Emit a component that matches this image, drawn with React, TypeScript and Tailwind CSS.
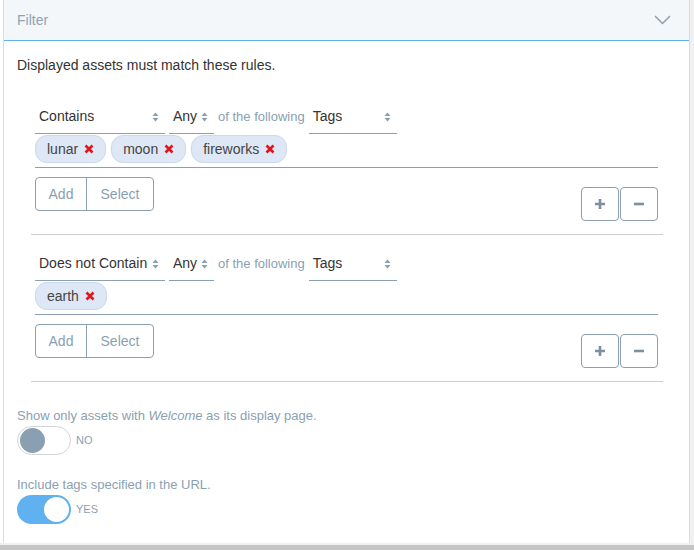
import React from "react";

const font = { fontFamily: '"Liberation Sans", Arial, sans-serif' };

function SortArrows() {
  return (
    <svg width="7" height="10" viewBox="0 0 7 10" className="shrink-0">
      <path d="M3.5 0.5 L6.5 4 H0.5 Z" fill="#8a9fb3" />
      <path d="M3.5 9.5 L6.5 6 H0.5 Z" fill="#8a9fb3" />
    </svg>
  );
}

function RedX() {
  return (
    <svg width="10" height="10" viewBox="0 0 10 10" className="shrink-0">
      <path d="M1.5 1.5 L8.5 8.5 M8.5 1.5 L1.5 8.5" stroke="#e3131a" strokeWidth="2.6" strokeLinecap="butt" />
    </svg>
  );
}

function Select({ label, width }: { label: string; width: string }) {
  return (
    <div className={`${width} h-full flex items-center justify-between pl-[4px] pr-[6px] border-b border-[#8a9fb0] text-[14px] text-[#333]`}>
      <span className="whitespace-nowrap">{label}</span>
      <SortArrows />
    </div>
  );
}

function Chip({ label }: { label: string }) {
  return (
    <div className="h-[28px] flex items-center gap-[6px] pl-[11px] pr-[11px] rounded-[12px] bg-[#dee7f6] border border-[#cbd8ee] text-[14px] text-[#444]">
      <span>{label}</span>
      <RedX />
    </div>
  );
}

function Rule({ op, tags }: { op: string; tags: string[] }) {
  return (
    <div className="border-b border-[#cccccc] pl-[4px] pr-[5px] pb-[13px]">
      <div className="h-[34px] flex items-stretch gap-[4px]">
        <Select label={op} width="w-[130px]" />
        <Select label="Any" width="w-[45px]" />
        <div className="flex items-center text-[13px] text-[#8a9fb3] whitespace-nowrap">of the following</div>
        <Select label="Tags" width="w-[88px]" />
      </div>
      <div className="flex gap-[5px] pt-[1px] pb-[4px] border-b border-[#8a9fb0]">
        {tags.map((t) => (
          <Chip key={t} label={t} />
        ))}
      </div>
      <div className="flex justify-between items-start mt-[9px]">
        <div className="flex h-[34px] border border-[#8a9fb0] rounded-[4px] text-[14px] text-[#8a9fb3]">
          <div className="w-[51px] flex items-center justify-center border-r border-[#8a9fb0]">Add</div>
          <div className="w-[66px] flex items-center justify-center">Select</div>
        </div>
        <div className="flex gap-[1px] mt-[10px]">
          <div className="w-[38px] h-[34px] border border-[#8a9fb0] rounded-[4px] flex items-center justify-center">
            <svg width="12" height="12" viewBox="0 0 12 12">
              <path d="M6 1 V11 M1 6 H11" stroke="#7b90a3" strokeWidth="2.6" />
            </svg>
          </div>
          <div className="w-[38px] h-[34px] border border-[#8a9fb0] rounded-[4px] flex items-center justify-center">
            <svg width="12" height="12" viewBox="0 0 12 12">
              <path d="M1 6 H11" stroke="#7b90a3" strokeWidth="2.6" />
            </svg>
          </div>
        </div>
      </div>
    </div>
  );
}

function Toggle({ on }: { on: boolean }) {
  return (
    <div className="flex items-center gap-[5px]">
      {on ? (
        <div className="w-[54px] h-[29px] rounded-full bg-[#5fb2ef] flex items-center justify-end pr-[2px]">
          <div className="w-[25px] h-[25px] rounded-full bg-white" />
        </div>
      ) : (
        <div className="w-[54px] h-[29px] rounded-full bg-white border border-[#d4d4d4] flex items-center pl-[2px]">
          <div className="w-[25px] h-[25px] rounded-full bg-[#8a9fb1]" />
        </div>
      )}
      <span className="text-[11px] text-[#8a9fb3]">{on ? "YES" : "NO"}</span>
    </div>
  );
}

export default function App() {
  return (
    <div className="w-[694px] h-[550px] bg-white flex flex-col overflow-hidden" style={font}>
      <div className="flex flex-1 min-h-0">
        <div className="ml-[3px] w-[687px] border-l border-r border-[#d9dde1] flex flex-col">
          <div className="h-[41px] shrink-0 bg-[#f4f7fa] border-b border-[#5fb1ee] flex items-center justify-between pl-[13px] pr-[18px]">
            <span className="text-[14px] text-[#8fa3b6]">Filter</span>
            <svg width="17" height="10" viewBox="0 0 17 10">
              <path d="M1 1 L8.5 8.5 L16 1" fill="none" stroke="#8a9fb3" strokeWidth="1.5" />
            </svg>
          </div>
          <div className="pl-[13px] pr-[13px] pt-[16px]">
            <p className="text-[14px] leading-[16px] text-[#333]">Displayed assets must match these rules.</p>
            <div className="ml-[14px] mr-[13px] mt-[27px] flex flex-col gap-[12px]">
              <Rule op="Contains" tags={["lunar", "moon", "fireworks"]} />
              <Rule op="Does not Contain" tags={["earth"]} />
            </div>
            <p className="mt-[26px] text-[13px] leading-[16px] text-[#8a9fb3]">
              Show only assets with <em>Welcome</em> as its display page.
            </p>
            <div className="mt-[2px]">
              <Toggle on={false} />
            </div>
            <p className="mt-[22px] text-[13px] leading-[16px] text-[#8a9fb3]">Include tags specified in the URL.</p>
            <div className="mt-[2px]">
              <Toggle on={true} />
            </div>
          </div>
        </div>
        <div className="flex-1 bg-[#f0f0f0]" />
      </div>
      <div className="h-[2px] bg-[#f0f0f0]" />
      <div className="h-[5px] bg-[#c6c6c6]" />
    </div>
  );
}
